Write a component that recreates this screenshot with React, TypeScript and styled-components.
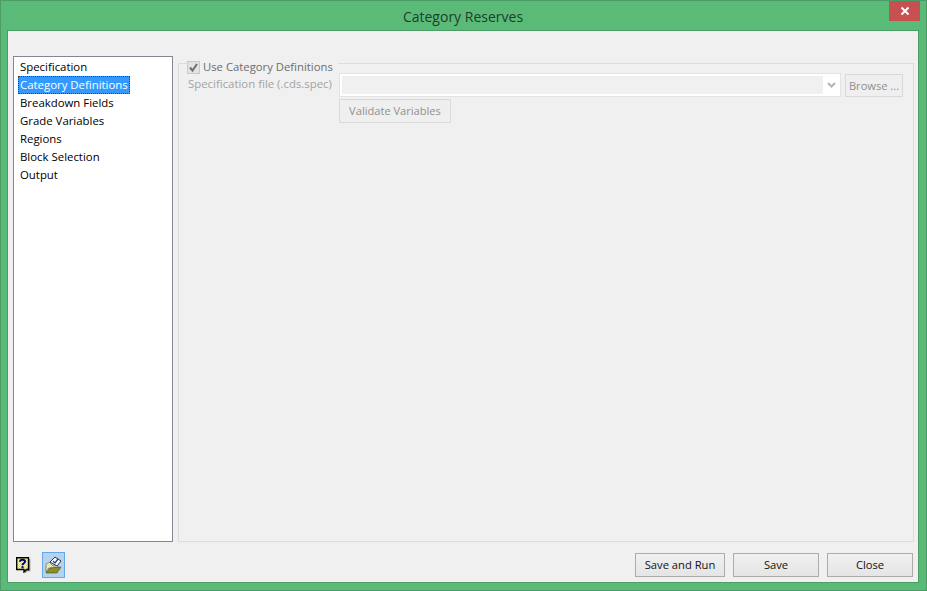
import { createGlobalStyle, styled } from "styled-components";

const GlobalStyle = createGlobalStyle`
  html, body {
    margin: 0;
    padding: 0;
    background: #5abb78;
  }
  body {
    font-family: "Open Sans", "Noto Sans", sans-serif;
    font-size: 12px;
  }
`;

const Window = styled.div`
  width: 927px;
  height: 591px;
  box-sizing: border-box;
  background: #5abb78;
  border: 1px solid #4c9c68;
  display: flex;
  flex-direction: column;
`;

const TitleBar = styled.div`
  height: 29px;
  flex: none;
  position: relative;
  display: flex;
  align-items: center;
  justify-content: center;
`;

const Title = styled.div`
  font-size: 14px;
  color: #1f3d2a;
  margin: 1px 1px 0 0;
`;

const CloseX = styled.div`
  position: absolute;
  top: 0;
  right: 6px;
  width: 31px;
  height: 20px;
  background: #c75050;
  display: flex;
  align-items: center;
  justify-content: center;
`;

const Client = styled.div`
  flex: 1;
  margin: 0 7px 7px 6px;
  background: #f0f0f0;
  border: 1px solid #4c9c68;
  display: flex;
  flex-direction: column;
  padding: 25px 4px 5px 5px;
  min-height: 0;
`;

const Main = styled.div`
  flex: 1;
  display: flex;
  gap: 5px;
  min-height: 0;
`;

const NavList = styled.ul`
  width: 160px;
  box-sizing: border-box;
  margin: 0;
  padding: 1px 4px 0 4px;
  list-style: none;
  background: #fff;
  border: 1px solid #828790;
`;

const NavItem = styled.li<{ $selected?: boolean }>`
  height: 18px;
  line-height: 18px;
  padding: 0 2px;
  width: fit-content;
  font-size: 11.4px;
  box-sizing: border-box;
  white-space: nowrap;
  color: ${(p) => (p.$selected ? "#fff" : "#000")};
  background: ${(p) => (p.$selected ? "#3399ff" : "transparent")};
  outline: ${(p) => (p.$selected ? "1px dotted #6b3a00" : "none")};
  outline-offset: -1px;
`;

const Group = styled.fieldset`
  flex: 1;
  min-width: 0;
  box-sizing: border-box;
  margin: 0;
  padding: 0 10px 0 9px;
  border: 1px solid #dcdcdc;
`;

const GroupLegend = styled.legend`
  position: relative;
  top: 4px;
  margin-left: -1px;
  padding: 0 5px 0 0;
  height: 14px;
  display: flex;
  align-items: center;
  gap: 3px;
  font-size: 11.3px;
  color: #6d6d6d;
  box-sizing: content-box;
`;

const LegendText = styled.span`
  margin-top: -2px;
`;

const CheckBox = styled.span`
  width: 13px;
  height: 13px;
  box-sizing: border-box;
  border: 1px solid #c9c9c9;
  background: #e3e3e3;
  display: flex;
  align-items: center;
  justify-content: center;
`;

const FormGrid = styled.div`
  display: grid;
  grid-template-columns: 151px 502px 58px;
  row-gap: 2px;
  margin-top: 3px;
`;

const FieldLabel = styled.label`
  font-size: 11.4px;
  color: #a3a3a3;
  line-height: 22px;
  white-space: nowrap;
`;

const Combo = styled.div`
  height: 24px;
  box-sizing: border-box;
  background: #fff;
  border: 1px solid #e3e3e3;
  display: flex;
  align-items: stretch;
  padding: 2px 0 2px 2px;
`;

const ComboField = styled.div`
  flex: 1;
  background: #f0f0f0;
`;

const ComboArrow = styled.div`
  width: 17px;
  flex: none;
  display: flex;
  align-items: center;
  justify-content: center;
`;

const DisabledButton = styled.button<{ $browse?: boolean }>`
  height: ${(p) => (p.$browse ? "23px" : "24px")};
  width: ${(p) => (p.$browse ? "58px" : "112px")};
  margin: ${(p) => (p.$browse ? "1px 0 0 4px" : "0")};
  box-sizing: border-box;
  border: 1px solid #d9d9d9;
  background: #efefef;
  color: #8f8f8f;
  font: inherit;
  font-size: 11.1px;
  padding: ${(p) => (p.$browse ? "0" : "0 0 2px 0")};
  white-space: nowrap;
`;

const Footer = styled.div`
  height: 35px;
  flex: none;
  display: flex;
  align-items: flex-end;
  padding: 0 1px 0 2px;
`;

const HelpIcon = styled.div`
  width: 17px;
  height: 16px;
  margin: 0 9px 4px 0;
  padding-left: 1px;
`;

const FolderButton = styled.div`
  width: 23px;
  height: 26px;
  margin-bottom: -1px;
  box-sizing: border-box;
  border: 1px solid #66a7e8;
  background: #b4d3ef;
  display: flex;
  align-items: center;
  justify-content: center;
`;

const Actions = styled.div`
  margin-left: auto;
  display: flex;
  gap: 8px;
`;

const ActionButton = styled.button<{ $width: number }>`
  width: ${(p) => p.$width}px;
  height: 24px;
  box-sizing: border-box;
  border: 1px solid #acacac;
  background: linear-gradient(#f0f0f0, #e5e5e5);
  color: #111;
  font: inherit;
  font-size: 11.2px;
  padding: 0 0 2px 0;
`;

const navItems = [
  "Specification",
  "Category Definitions",
  "Breakdown Fields",
  "Grade Variables",
  "Regions",
  "Block Selection",
  "Output",
];

export default function App() {
  return (
    <>
      <GlobalStyle />
      <Window>
        <TitleBar>
          <Title>Category Reserves</Title>
          <CloseX>
            <svg width="10" height="10" viewBox="0 0 10 10">
              <path d="M1.5 1.5 L8.5 8.5 M8.5 1.5 L1.5 8.5" stroke="#fff" strokeWidth="2" />
            </svg>
          </CloseX>
        </TitleBar>
        <Client>
          <Main>
            <NavList>
              {navItems.map((item) => (
                <NavItem key={item} $selected={item === "Category Definitions"}>
                  {item}
                </NavItem>
              ))}
            </NavList>
            <Group>
              <GroupLegend>
                <CheckBox>
                  <svg width="11" height="11" viewBox="0 0 11 11">
                    <path d="M2 5.5 L4.5 8.5 L9 2" fill="none" stroke="#6f6f6f" strokeWidth="2" />
                  </svg>
                </CheckBox>
                <LegendText>Use Category Definitions</LegendText>
              </GroupLegend>
              <FormGrid>
                <FieldLabel>Specification file (.cds.spec)</FieldLabel>
                <Combo>
                  <ComboField />
                  <ComboArrow>
                    <svg width="9" height="6" viewBox="0 0 9 6">
                      <path d="M1 1 L4.5 4.5 L8 1" fill="none" stroke="#b5b5b5" strokeWidth="2" />
                    </svg>
                  </ComboArrow>
                </Combo>
                <DisabledButton $browse>Browse ...</DisabledButton>
                <span />
                <DisabledButton>Validate Variables</DisabledButton>
              </FormGrid>
            </Group>
          </Main>
          <Footer>
            <HelpIcon>
              <svg width="15" height="16" viewBox="0 0 15 16">
                <defs>
                  <pattern id="helpDither" width="2" height="2" patternUnits="userSpaceOnUse">
                    <rect width="2" height="2" fill="#ffffa8" />
                    <rect width="1" height="1" fill="#f2ea00" />
                    <rect x="1" y="1" width="1" height="1" fill="#f2ea00" />
                  </pattern>
                </defs>
                <path d="M13.7 2 V13.7 H11 L9 15.7" fill="none" stroke="#8a8a8a" strokeWidth="1.2" />
                <path d="M0.7 0.7 H12.5 V12.5 H10.5 L8 15 V12.5 H0.7 Z" fill="url(#helpDither)" stroke="#000" strokeWidth="1.4" />
                <path d="M4 4.8 Q4 2.8 6.5 2.8 Q9 2.8 9 4.6 Q9 5.8 7.7 6.4 Q6.5 7 6.5 8.3" fill="none" stroke="#00007a" strokeWidth="2" />
                <rect x="5.5" y="9.2" width="2.1" height="2.1" fill="#00007a" />
              </svg>
            </HelpIcon>
            <FolderButton>
              <svg width="19" height="20" viewBox="0 0 19 20">
                <defs>
                  <pattern id="folderDither" width="2" height="2" patternUnits="userSpaceOnUse">
                    <rect width="2" height="2" fill="#fbf8c0" />
                    <rect width="1" height="1" fill="#eee400" />
                    <rect x="1" y="1" width="1" height="1" fill="#eee400" />
                  </pattern>
                </defs>
                <path d="M6 7 L11 2 L17 6 L13 11 Z" fill="#fff" stroke="#333" strokeWidth="1" />
                <path d="M9 6 L11 8 L14 4" fill="none" stroke="#1c4fa8" strokeWidth="1.4" />
                <path d="M2 9 L5 7 L9 11 L14 11 L14 13 L5 13 L2 17 Z" fill="url(#folderDither)" stroke="#555" strokeWidth="0.6" />
                <path d="M2 18 L6 13 L17 12 L13 18 Z" fill="#8c8c28" stroke="#4a4a20" strokeWidth="0.6" />
              </svg>
            </FolderButton>
            <Actions>
              <ActionButton $width={90}>Save and Run</ActionButton>
              <ActionButton $width={86}>Save</ActionButton>
              <ActionButton $width={86}>Close</ActionButton>
            </Actions>
          </Footer>
        </Client>
      </Window>
    </>
  );
}
